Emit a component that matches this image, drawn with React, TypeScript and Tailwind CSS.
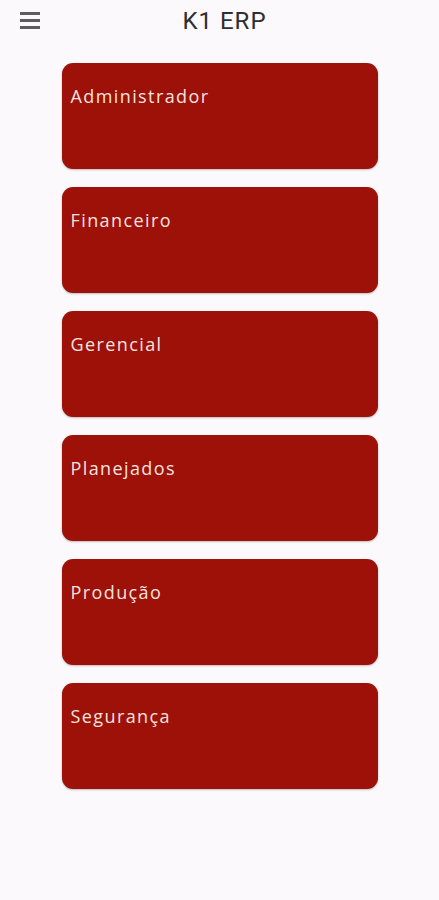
import React from 'react';

const modules = ['Administrador', 'Financeiro', 'Gerencial', 'Planejados', 'Produção', 'Segurança'];

export default function App() {
  return (
    <div className="min-h-[900px] w-full bg-[#fcf9fc] font-['Roboto',sans-serif]">
      {/* Header */}
      <div className="relative flex h-[42px] items-center justify-center">
        <button className="absolute left-[20px] top-[12px] flex flex-col gap-[4.5px]">
          <span className="block h-[2.5px] w-[20px] bg-[#5c5c5c]" />
          <span className="block h-[2.5px] w-[20px] bg-[#5c5c5c]" />
          <span className="block h-[2.5px] w-[20px] bg-[#5c5c5c]" />
        </button>
        <h1 className="ml-[10px] text-[24px] font-normal tracking-[1px] text-[#2e2e2e]">K1 ERP</h1>
      </div>

      {/* Module cards */}
      <div className="mt-[21px] flex flex-col items-center gap-[18px]">
        {modules.map((name) => (
          <div
            key={name}
            className="h-[106px] w-[316px] rounded-[11px] bg-[#9d1108] pl-[9px] pt-[22px] shadow-[0_1px_2px_rgba(0,0,0,0.25)]"
          >
            <span className="font-['Open_Sans',sans-serif] text-[18px] font-medium leading-[22px] tracking-[1.4px] text-[#f5e3df]">
              {name}
            </span>
          </div>
        ))}
      </div>
    </div>
  );
}
